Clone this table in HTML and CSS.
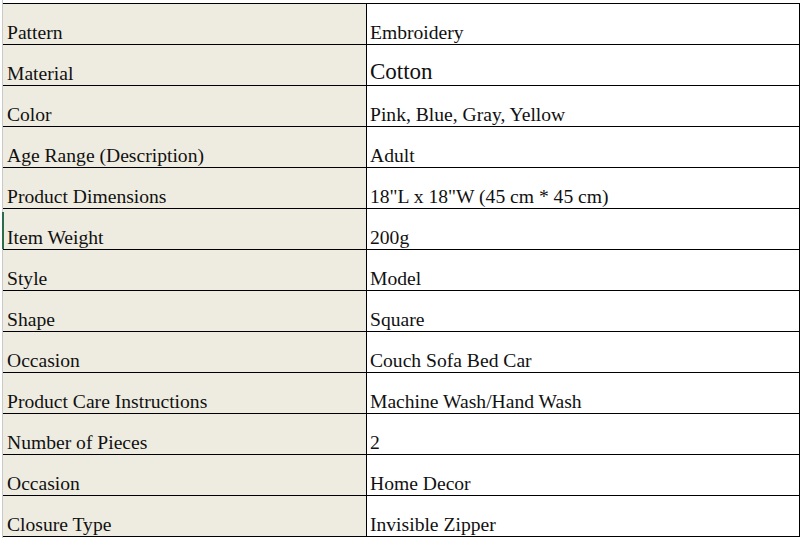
FILE: index.html
```html
<!DOCTYPE html>
<html lang="en">
<head>
<meta charset="utf-8">
<title>Product Details</title>
<link rel="stylesheet" href="styles.css">
</head>
<body>
<div class="sheet">
  <div class="specs">
    <div class="label">Pattern</div><div class="value">Embroidery</div>
    <div class="label">Material</div><div class="value value-lg">Cotton</div>
    <div class="label">Color</div><div class="value">Pink, Blue, Gray, Yellow</div>
    <div class="label">Age Range (Description)</div><div class="value">Adult</div>
    <div class="label">Product Dimensions</div><div class="value">18"L x 18"W (45 cm * 45 cm)</div>
    <div class="label label-active">Item Weight</div><div class="value">200g</div>
    <div class="label">Style</div><div class="value">Model</div>
    <div class="label">Shape</div><div class="value">Square</div>
    <div class="label">Occasion</div><div class="value">Couch Sofa Bed Car</div>
    <div class="label">Product Care Instructions</div><div class="value">Machine Wash/Hand Wash</div>
    <div class="label">Number of Pieces</div><div class="value">2</div>
    <div class="label">Occasion</div><div class="value">Home Decor</div>
    <div class="label">Closure Type</div><div class="value">Invisible Zipper</div>
  </div>
</div>
</body>
</html>
```
FILE: styles.css
```css
html, body {
  margin: 0;
  padding: 0;
  background: #ffffff;
  height: 100%;
  overflow: hidden;
}

.sheet {
  margin-left: 2px;
  padding-top: 3px;
  border-left: 1px solid #c9c9c9;
  height: 100%;
  box-sizing: border-box;
  font-family: "Liberation Serif", "Times New Roman", serif;
  color: #111111;
}

.specs {
  display: grid;
  grid-template-columns: 364px 433px;
  grid-auto-rows: 41px;
  border-top: 1px solid #000000;
  width: 797px;
}

.label,
.value {
  box-sizing: border-box;
  border-bottom: 1px solid #000000;
  display: flex;
  align-items: flex-end;
  font-size: 19.6px;
  line-height: 19px;
  padding-bottom: 2px;
  white-space: nowrap;
}

.label {
  background: #eeece1;
  border-right: 1px solid #000000;
  padding-left: 4px;
  position: relative;
}

.label-active::before {
  content: "";
  position: absolute;
  left: -1px;
  top: 3px;
  bottom: 0;
  width: 2px;
  background: #2e6b4a;
}

.value {
  background: #ffffff;
  border-right: 1px solid #000000;
  padding-left: 3px;
}

.value-lg {
  font-size: 23px;
  line-height: 22px;
}
```
